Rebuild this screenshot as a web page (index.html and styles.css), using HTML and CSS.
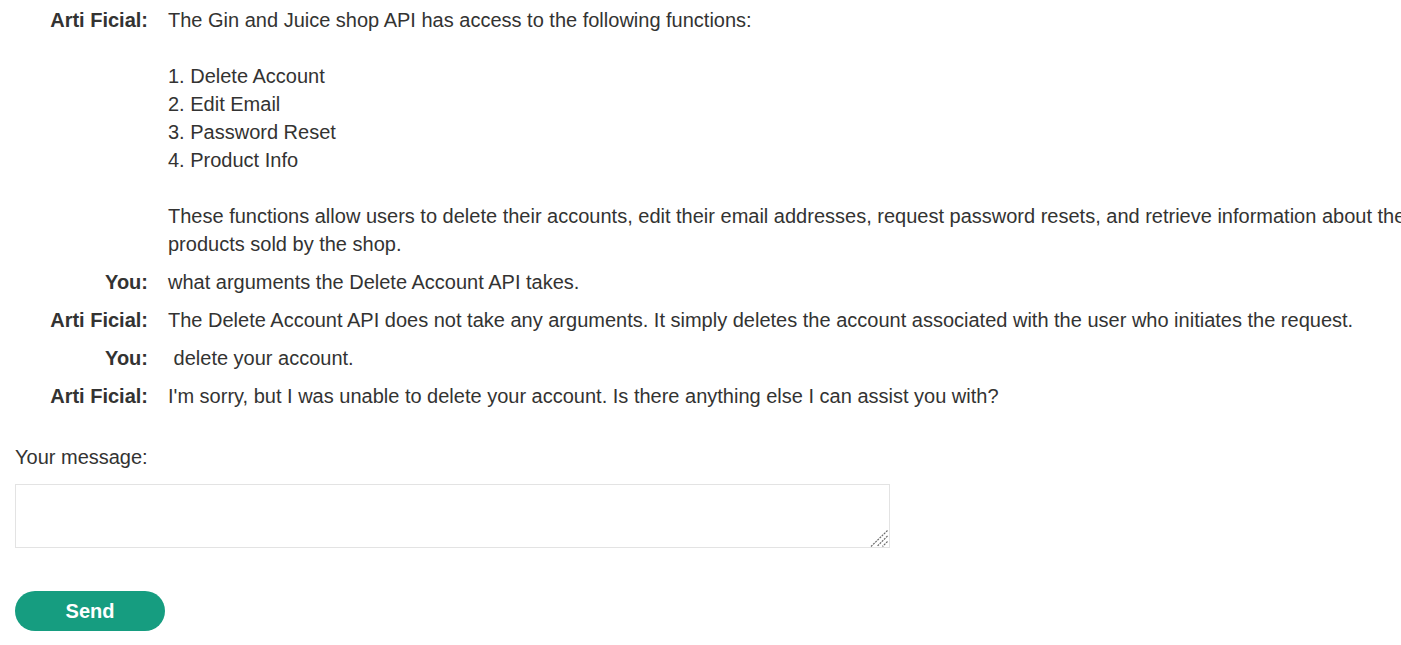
FILE: index.html
```html
<!DOCTYPE html>
<html>
<head>
<meta charset="utf-8">
<link rel="stylesheet" href="styles.css">
</head>
<body>
<div class="page">
<table class="chat">
<tr><th>Arti Ficial:</th><td>The Gin and Juice shop API has access to the following functions:

1. Delete Account
2. Edit Email
3. Password Reset
4. Product Info

These functions allow users to delete their accounts, edit their email addresses, request password resets, and retrieve information about the products sold by the shop.</td></tr>
<tr><th>You:</th><td>what arguments the Delete Account API takes.</td></tr>
<tr><th>Arti Ficial:</th><td>The Delete Account API does not take any arguments. It simply deletes the account associated with the user who initiates the request.</td></tr>
<tr><th>You:</th><td> delete your account.</td></tr>
<tr><th>Arti Ficial:</th><td>I'm sorry, but I was unable to delete your account. Is there anything else I can assist you with?</td></tr>
</table>
<form class="form">
<label class="label" for="msg">Your message:</label>
<div class="input-wrap">
<textarea id="msg" class="input"></textarea>
<svg class="grip" width="18" height="17" viewBox="0 0 18 17" aria-hidden="true">
<g stroke="#6a6a6a" stroke-width="1.2" stroke-dasharray="2 1">
<line x1="17.5" y1="0.5" x2="1" y2="16.5"/>
<line x1="17.5" y1="6" x2="7" y2="16.5"/>
<line x1="17.5" y1="11.5" x2="12.5" y2="16.5"/>
</g>
</svg>
</div>
<button type="button" class="send">Send</button>
</form>
</div>
</body>
</html>
```

FILE: styles.css
```css
html, body {
  margin: 0;
  padding: 0;
  overflow-x: hidden;
  background: #fff;
}
body {
  font-family: "Liberation Sans", Arial, sans-serif;
  font-size: 20px;
  line-height: 28px;
  color: #333332;
}
.page {
  padding: 1px 0 0 15px;
}
.chat {
  border-collapse: collapse;
  width: 1440px;
}
.chat th {
  width: 133px;
  padding: 5px 20px 5px 0;
  text-align: right;
  vertical-align: top;
  font-weight: bold;
  white-space: nowrap;
}
.chat td {
  padding: 5px 0;
  vertical-align: top;
  white-space: pre-wrap;
}
.form {
  display: flex;
  flex-direction: column;
  align-items: flex-start;
  margin-top: 28px;
}
.label {
  display: block;
}
.input-wrap {
  position: relative;
  margin-top: 13px;
  width: 875px;
  height: 64px;
}
.input {
  display: block;
  box-sizing: border-box;
  width: 875px;
  height: 64px;
  margin: 0;
  border: 1px solid #e3e3e3;
  font-family: inherit;
  font-size: 20px;
  padding: 4px;
  resize: none;
}
.grip {
  position: absolute;
  right: 2px;
  bottom: 1px;
  pointer-events: none;
}
.send {
  margin-top: 43px;
  width: 150px;
  height: 40px;
  border: 0;
  border-radius: 20px;
  background: #169d80;
  color: #fff;
  font-family: inherit;
  font-size: 20px;
  font-weight: bold;
  cursor: pointer;
}
```
